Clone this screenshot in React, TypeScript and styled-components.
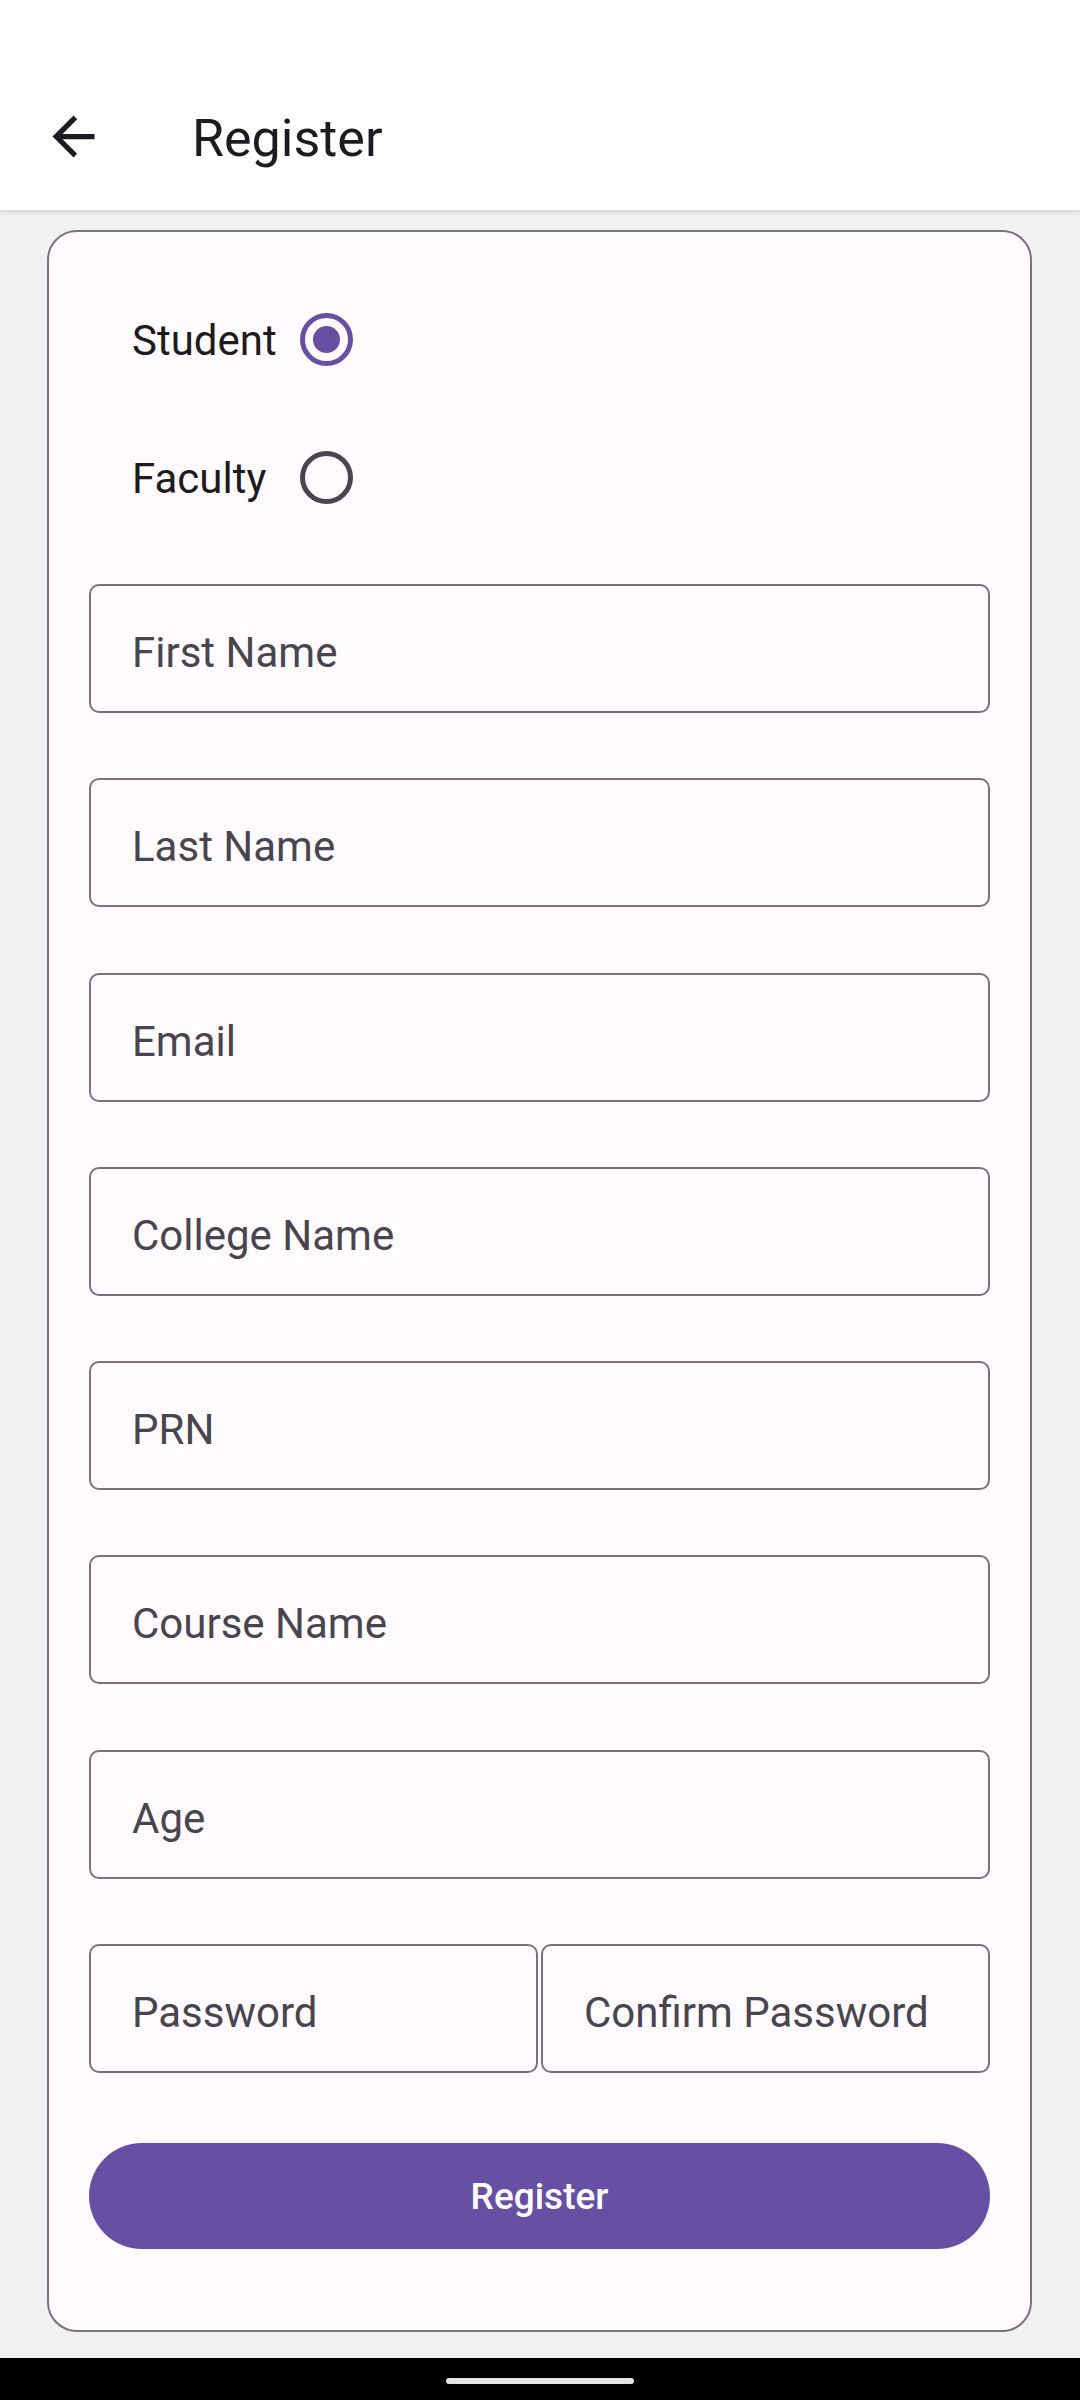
import React from "react";
import styled, { createGlobalStyle } from "styled-components";

const GlobalStyle = createGlobalStyle`
  html, body {
    margin: 0;
    padding: 0;
    background: #f1f1f1;
  }
  * { box-sizing: border-box; }
  body {
    font-family: Roboto, "Noto Sans", "Liberation Sans", sans-serif;
  }
`;

const Screen = styled.div`
  width: 1080px;
  height: 2400px;
  display: flex;
  flex-direction: column;
  background: #f1f1f1;
  overflow: hidden;
`;

const Header = styled.header`
  height: 210px;
  flex-shrink: 0;
  background: #ffffff;
  padding-top: 63px;
  box-shadow: 0 2px 5px rgba(0, 0, 0, 0.12);
  position: relative;
  z-index: 1;
`;

const Toolbar = styled.div`
  height: 147px;
  display: flex;
  align-items: center;
`;

const BackButton = styled.button`
  width: 63px;
  height: 63px;
  margin-left: 42px;
  padding: 0;
  border: none;
  background: transparent;
  display: flex;
  align-items: center;
  justify-content: center;
`;

const Title = styled.h1`
  margin: 4px 0 0 87px;
  font-size: 52px;
  font-weight: 400;
  color: #1d1b20;
  line-height: normal;
`;

const Main = styled.main`
  flex: 1;
  padding: 20px 48px 26px 47px;
  display: flex;
`;

const Card = styled.section`
  flex: 1;
  background: #fffbfe;
  border: 2px solid #79747e;
  border-radius: 30px;
  padding: 38px 40px 81px 40px;
  display: flex;
  flex-direction: column;
`;

const RadioGroup = styled.div`
  display: flex;
  flex-direction: column;
  margin-bottom: 38px;
`;

const RadioRow = styled.label`
  height: 138px;
  display: flex;
  align-items: center;
  padding-left: 43px;
`;

const RadioLabel = styled.span`
  width: 168px;
  font-size: 42px;
  color: #1d1b20;
  padding-top: 3px;
`;

const RadioCircle = styled.span<{ $checked?: boolean }>`
  width: 53px;
  height: 53px;
  border-radius: 50%;
  border: 5px solid ${(p) => (p.$checked ? "#6750a4" : "#49454f")};
  display: flex;
  align-items: center;
  justify-content: center;
  &::after {
    content: "";
    width: 27px;
    height: 27px;
    border-radius: 50%;
    background: #6750a4;
    display: ${(p) => (p.$checked ? "block" : "none")};
  }
`;

const Fields = styled.div`
  display: flex;
  flex-direction: column;
  gap: 65.3px;
`;

const FieldRow = styled.div`
  display: flex;
  gap: 3px;
`;

const Field = styled.div`
  flex: 1;
  height: 129px;
  border: 2px solid #77737c;
  border-radius: 10px;
  display: flex;
  align-items: center;
  padding: 8px 0 0 41px;
  font-size: 42px;
  color: #49454f;
  white-space: nowrap;
  overflow: hidden;
`;

const PrimaryButton = styled.button`
  margin-top: 70px;
  height: 106px;
  border: none;
  border-radius: 53px;
  background: #6750a4;
  color: #ffffff;
  font-family: Roboto, "Noto Sans", sans-serif;
  font-size: 37px;
  font-weight: 500;
  display: flex;
  align-items: center;
  justify-content: center;
  padding-top: 2px;
`;

const NavBar = styled.div`
  height: 42px;
  flex-shrink: 0;
  background: #000000;
  display: flex;
  align-items: center;
  justify-content: center;
`;

const Handle = styled.div`
  width: 188px;
  height: 6px;
  border-radius: 3px;
  background: #e4e4e4;
  margin-top: 3px;
`;

const fields = [
  "First Name",
  "Last Name",
  "Email",
  "College Name",
  "PRN",
  "Course Name",
  "Age",
];

export default function App() {
  return (
    <Screen>
      <GlobalStyle />
      <Header>
        <Toolbar>
          <BackButton aria-label="Back">
            <svg width="63" height="63" viewBox="0 0 24 24">
              <path
                fill="#1d1b20"
                d="M20 11H7.83l5.59-5.59L12 4l-8 8 8 8 1.41-1.41L7.83 13H20v-2z"
              />
            </svg>
          </BackButton>
          <Title>Register</Title>
        </Toolbar>
      </Header>
      <Main>
        <Card>
          <RadioGroup>
            <RadioRow>
              <RadioLabel>Student</RadioLabel>
              <RadioCircle $checked />
            </RadioRow>
            <RadioRow>
              <RadioLabel>Faculty</RadioLabel>
              <RadioCircle />
            </RadioRow>
          </RadioGroup>
          <Fields>
            {fields.map((f) => (
              <FieldRow key={f}>
                <Field>{f}</Field>
              </FieldRow>
            ))}
            <FieldRow>
              <Field>Password</Field>
              <Field>Confirm Password</Field>
            </FieldRow>
          </Fields>
          <PrimaryButton>Register</PrimaryButton>
        </Card>
      </Main>
      <NavBar>
        <Handle />
      </NavBar>
    </Screen>
  );
}
